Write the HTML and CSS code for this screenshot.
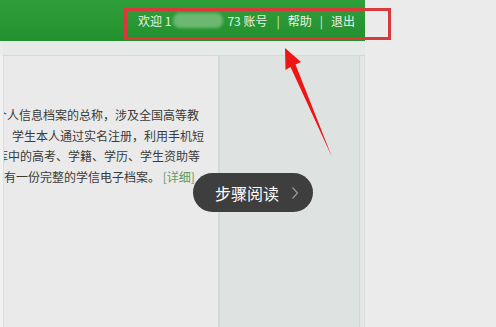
FILE: index.html
```html
<!DOCTYPE html>
<html lang="zh-CN">
<head>
<meta charset="utf-8">
<title>学信档案</title>
<link rel="stylesheet" href="styles.css">
</head>
<body>
<div class="page">
  <div class="header">
    <span class="hello">欢迎 1</span><span class="blur"></span><span class="acct">73 账号</span><span class="sep">|</span><span class="lnk">帮助</span><span class="sep">|</span><span class="lnk">退出</span>
  </div>
  <div class="sub"></div>
  <div class="body">
    <div class="main">
      <div class="text">
        <div class="ln ln1">个人信息档案的总称，涉及全国高等教</div>
        <div class="ln ln2">学生本人通过实名注册，利用手机短</div>
        <div class="ln ln3">库中的高考、学籍、学历、学生资助等</div>
        <div class="ln ln4">有一份完整的学信电子档案。 <span class="more">[详细]</span></div>
      </div>
    </div>
    <div class="side"></div>
    <div class="edge"></div>
  </div>
</div>
<svg class="notes" width="496" height="327" viewBox="0 0 496 327">
  <rect x="125.5" y="9.5" width="264" height="29" fill="none" stroke="#d8393b" stroke-width="3"/>
  <polygon points="285,48 285.5,70 290.5,67 332,157 295.5,64.5 301,62" fill="#ee1515"/>
</svg>
<div class="pill"><span class="pill-t">步骤阅读</span><svg class="chev" width="8" height="14" viewBox="0 0 8 14"><path d="M1.5 1.5 L6.5 7 L1.5 12.5" fill="none" stroke="#9a9a9a" stroke-width="1.2"/></svg></div>
</body>
</html>
```
FILE: styles.css
```css
html, body {
  margin: 0;
  padding: 0;
}
body {
  width: 496px;
  height: 327px;
  overflow: hidden;
  background: #ebebeb;
  font-family: "Noto Sans CJK SC", "Noto Sans", sans-serif;
  position: relative;
}
.page {
  width: 365px;
  height: 327px;
  display: flex;
  flex-direction: column;
}
.header {
  height: 41px;
  flex: none;
  background: linear-gradient(#2f9f3a, #23902f);
  display: flex;
  align-items: center;
  justify-content: flex-end;
  padding-right: 10px;
  color: #e6f4e6;
  font-size: 12px;
  line-height: 16px;
  box-sizing: border-box;
}
.blur {
  display: inline-block;
  width: 50px;
  height: 15px;
  margin: 0 4px 0 2px;
  border-radius: 7px;
  background: #6cb870;
  filter: blur(1.5px);
}
.sep {
  margin: 0 8px;
  color: #d8ecd8;
}
.acct {
  margin-right: 1px;
}
.sub {
  height: 14px;
  flex: none;
  background: #e5eae8;
  border-bottom: 1px solid #d4dad7;
  margin-left: 3px;
}
.body {
  flex: 1;
  display: flex;
  background: #f2f2f2;
}
.main {
  width: 216px;
  margin-left: 3px;
  border-left: 1px solid #dcdfdd;
  background: #e9eae9;
  overflow: hidden;
  position: relative;
}
.text {
  padding-top: 48px;
  font-size: 12px;
  line-height: 21px;
  color: #3a3a3a;
  white-space: nowrap;
}
.ln {
  height: 21px;
}
.ln1 { margin-left: -9px; }
.ln2 { margin-left: 8px; height: 20px; }
.ln3 { margin-left: -8px; }
.ln4 { margin-left: 0px; }
.more {
  color: #5e9a63;
}
.side {
  width: 140px;
  border-left: 2px solid #d3d9d6;
  border-right: 1px solid #d0d7d4;
  background: #dee3e1;
}
.edge {
  width: 4px;
  background: #e4e7e6;
  border-right: 1px solid #dde0df;
}
.notes {
  position: absolute;
  left: 0;
  top: 0;
  pointer-events: none;
}
.pill {
  position: absolute;
  left: 193px;
  top: 173px;
  width: 120px;
  height: 39px;
  border-radius: 20px;
  background: #3e3e3e;
  display: flex;
  align-items: center;
  box-sizing: border-box;
  padding-left: 22px;
  gap: 12px;
}
.pill-t {
  color: #ffffff;
  font-size: 16px;
  line-height: 20px;
}
.chev {
  display: block;
}
```
